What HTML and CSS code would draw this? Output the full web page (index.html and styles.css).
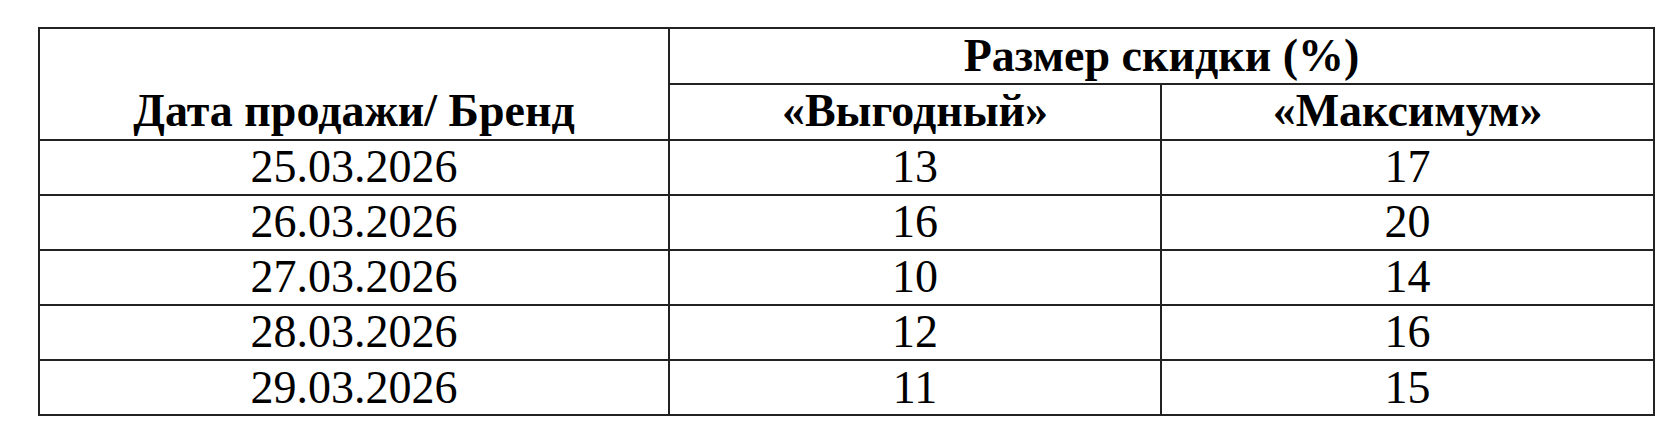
FILE: index.html
```html
<!DOCTYPE html>
<html>
<head>
<meta charset="utf-8">
<title>Размер скидки</title>
<link rel="stylesheet" href="styles.css">
</head>
<body>
<table class="discounts">
  <colgroup>
    <col class="c-date">
    <col class="c-val">
    <col class="c-val2">
  </colgroup>
  <thead>
    <tr class="r-h1">
      <th rowspan="2" class="h-date">Дата продажи/ Бренд</th>
      <th colspan="2">Размер скидки (%)</th>
    </tr>
    <tr class="r-h2">
      <th>«Выгодный»</th>
      <th>«Максимум»</th>
    </tr>
  </thead>
  <tbody>
    <tr><td>25.03.2026</td><td>13</td><td>17</td></tr>
    <tr><td>26.03.2026</td><td>16</td><td>20</td></tr>
    <tr><td>27.03.2026</td><td>10</td><td>14</td></tr>
    <tr><td>28.03.2026</td><td>12</td><td>16</td></tr>
    <tr><td>29.03.2026</td><td>11</td><td>15</td></tr>
  </tbody>
</table>
</body>
</html>
```
FILE: styles.css
```css
html, body {
  margin: 0;
  padding: 0;
  background: #ffffff;
}

body {
  padding: 27px 0 0 38px;
  font-family: "Liberation Serif", "Times New Roman", serif;
  color: #000;
}

.discounts {
  border-collapse: collapse;
  table-layout: fixed;
  width: 1615px;
  font-family: "Liberation Serif", "Times New Roman", serif;
  font-size: 46px;
  line-height: 52px;
}

.c-date { width: 630px; }
.c-val { width: 492px; }
.c-val2 { width: 493px; }

.discounts th,
.discounts td {
  border: 2px solid #222;
  padding: 0;
  text-align: center;
  vertical-align: middle;
  white-space: nowrap;
  font-family: "Liberation Serif", "Times New Roman", serif;
}

.discounts th {
  font-weight: bold;
}

.discounts th.h-date {
  vertical-align: bottom;
  padding-bottom: 2px;
}

.r-h2 th {
  padding-bottom: 2px;
}

.r-h1 { height: 55.5px; }
.r-h2 { height: 55px; }
.discounts tbody tr { height: 55.15px; }
```
